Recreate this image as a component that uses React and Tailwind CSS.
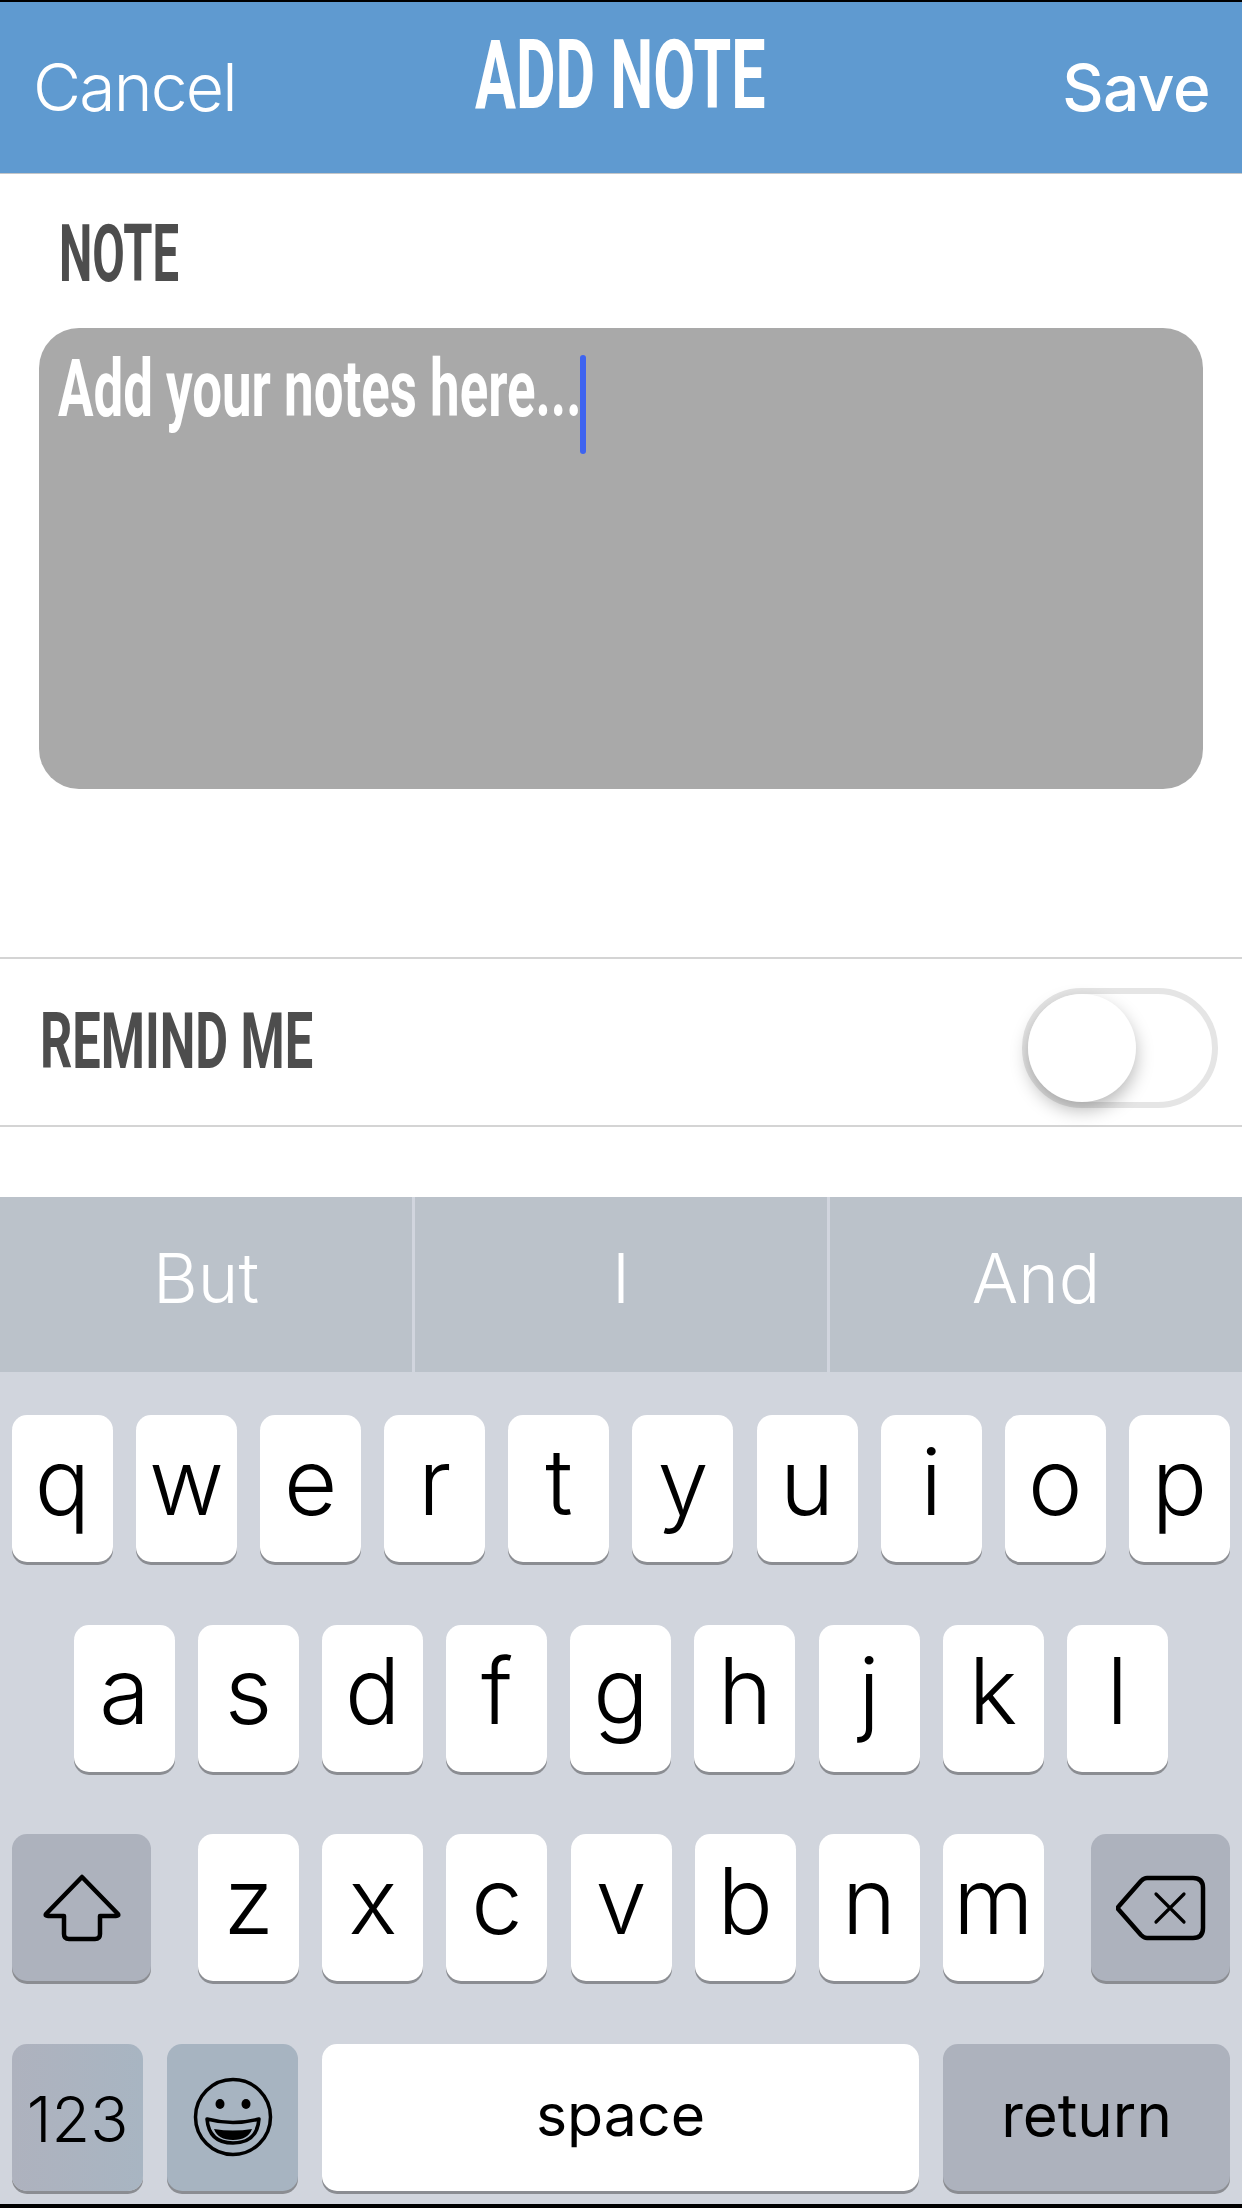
// App.jsx - Add Note screen with iOS keyboard
import React from 'react';

const din = "[font-family:Roboto,'Liberation_Sans',sans-serif] font-bold inline-block origin-left whitespace-nowrap";
const ios = "[font-family:Inter,'Liberation_Sans',sans-serif]";

const ShiftIcon = () => (
  <svg width="78" height="68" viewBox="0 0 78 68" fill="none" stroke="#000" strokeWidth="4.5" strokeLinejoin="round">
    <path d="M39 3 L75 40 Q76 42 73 42 H57 V60 Q57 65 52 65 H26 Q21 65 21 60 V42 H5 Q2 42 3 40 Z" />
  </svg>
);

const BackspaceIcon = () => (
  <svg width="90" height="66" viewBox="0 0 90 66" fill="none" stroke="#000" strokeLinecap="round" strokeLinejoin="round">
    <path strokeWidth="4.5" d="M31 3 H77 Q87 3 87 13 V53 Q87 63 77 63 H31 Q28 63 25 60 L3 35 Q1 33 3 31 L25 6 Q28 3 31 3 Z" />
    <path strokeWidth="3.2" d="M40 19 L68 47 M68 19 L40 47" />
  </svg>
);

const EmojiIcon = () => (
  <svg width="80" height="80" viewBox="0 0 80 80" fill="none">
    <circle cx="40" cy="40" r="37.5" stroke="#000" strokeWidth="3.5" />
    <ellipse cx="27" cy="27" rx="4.5" ry="5" fill="#000" />
    <ellipse cx="53" cy="27" rx="4.5" ry="5" fill="#000" />
    <path d="M14 42 Q40 49 66 42 Q64 66 40 66 Q16 66 14 42 Z" stroke="#000" strokeWidth="3.5" strokeLinejoin="round" />
    <path d="M21 52 Q40 55 59 52 Q55 63 40 63 Q25 63 21 52 Z" fill="#000" />
  </svg>
);

const Key = ({ children, className = '' }) => (
  <div className={`h-[147px] rounded-[15px] flex items-center justify-center shadow-[0_3px_0_#8b8d92] mb-[3px] text-black ${ios} ${className}`}>
    {children}
  </div>
);

const LetterKey = ({ label }) => (
  <Key className="w-[101px] bg-white text-[92px] font-[350] pb-[14px]">{label}</Key>
);

const Row = ({ keys, className = '' }) => (
  <div className={`flex gap-[23.1px] ${className}`}>
    {keys.split('').map((k) => <LetterKey key={k} label={k} />)}
  </div>
);

export default function App() {
  return (
    <div className="w-[1242px] h-[2208px] bg-black pt-[2px] pb-[4px] flex flex-col overflow-hidden">
      {/* Nav bar */}
      <div className="relative h-[172px] shrink-0 bg-[#5f9ad0] border-b border-[#c4c6c8] flex justify-between text-white pl-[33px] pr-[32px]">
        <span className={`${ios} text-[66px] font-[350] tracking-[-1.8px] leading-none pt-[52px]`}>Cancel</span>
        <span className={`${din} text-[96px] leading-none pt-[25px] scale-x-[0.635] absolute left-[475px]`}>ADD NOTE</span>
        <span className={`${ios} text-[64px] font-medium tracking-[-0.5px] leading-none pt-[54px]`}>Save</span>
      </div>

      {/* Body */}
      <div className="flex-1 bg-white flex flex-col">
        <div className="h-[154px] pl-[59px] pt-[40px] shrink-0">
          <span className={`${din} text-[80px] leading-none text-[#4d4d4d] scale-x-[0.59]`}>NOTE</span>
        </div>
        <div className="mx-[39px] h-[461px] shrink-0 rounded-[40px] bg-[#a9a9a9] flex items-start pl-[19px] pt-[27px]">
          <span className={`${din} text-[80px] leading-none text-white scale-x-[0.66] w-[522px] -mt-[6px]`}>Add your notes here...</span>
          <div className="w-[6px] h-[99px] rounded-full bg-[#3e64f0]" />
        </div>

        {/* Remind me */}
        <div className="mt-[168px] h-[170px] shrink-0 border-y-2 border-[#d4d4d4] flex items-center justify-between pl-[40px] pr-[24px]">
          <span className={`${din} text-[78px] leading-none text-[#4d4d4d] scale-x-[0.647]`}>REMIND ME</span>
          <div className="mt-[12px] w-[196px] h-[120px] rounded-full border-[6px] border-[#e5e5e5] bg-white flex items-center">
            <div className="w-[108px] h-[108px] rounded-full bg-white shadow-[0_8px_18px_rgba(0,0,0,0.28)]" />
          </div>
        </div>
      </div>

      {/* Suggestions */}
      <div className="h-[175px] shrink-0 bg-[#bbc2ca] flex text-white text-[69px] font-[350]">
        {['But', 'I', 'And'].map((w, i) => (
          <div key={w} className={`flex-1 flex items-center justify-center pb-[12px] ${ios} ${i < 2 ? 'border-r-[3px] border-[#d1d5de]' : ''}`}>
            {w}
          </div>
        ))}
      </div>

      {/* Keyboard */}
      <div className="h-[832px] shrink-0 bg-[#d1d5dd] px-[12px] pt-[43px] flex flex-col gap-[59.5px]">
        <Row keys="qwertyuiop" />
        <Row keys="asdfghjkl" className="pl-[62px]" />
        <div className="flex justify-between">
          <Key className="w-[139px] bg-[#adb2bd]"><ShiftIcon /></Key>
          <Row keys="zxcvbnm" />
          <Key className="w-[139px] bg-[#adb2bd]"><BackspaceIcon /></Key>
        </div>
        <div className="flex gap-[24px]">
          <Key className="w-[131px] bg-gradient-to-r from-[#aeb2be] to-[#a8b5c2] text-[63px] font-[350] pt-[4px]">123</Key>
          <Key className="w-[131px] bg-[#a7b4c1]"><EmojiIcon /></Key>
          <Key className="w-[597px] bg-white text-[59px] font-normal pb-[4px]">space</Key>
          <Key className="w-[287px] bg-[#adb2bd] text-[60px] font-normal pb-[4px]">return</Key>
        </div>
      </div>
    </div>
  );
}
